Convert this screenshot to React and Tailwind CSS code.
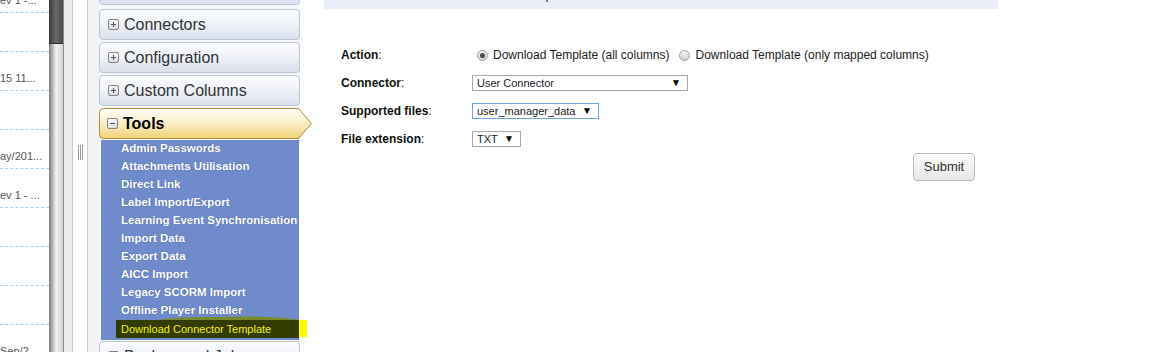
import React from "react";

const leftRows = [
  "ev 1 -...",
  "",
  "15 11...",
  "",
  "ay/201...",
  "ev 1 - ...",
  "",
  "",
  "",
  "Sep/2",
];

const tools = [
  "Admin Passwords",
  "Attachments Utilisation",
  "Direct Link",
  "Label Import/Export",
  "Learning Event Synchronisation",
  "Import Data",
  "Export Data",
  "AICC Import",
  "Legacy SCORM Import",
  "Offline Player Installer",
];

function ToggleBox({ open }) {
  return (
    <span className="flex h-[11px] w-[11px] items-center justify-center rounded-[2px] border border-[#858585] bg-gradient-to-b from-[#fafafa] to-[#dcdcdc]">
      <span className="relative block h-[5px] w-[5px]">
        <span className="absolute left-0 top-[2px] h-[1px] w-[5px] bg-[#555]" />
        {!open && <span className="absolute left-[2px] top-0 h-[5px] w-[1px] bg-[#555]" />}
      </span>
    </span>
  );
}

function AccordionItem({ label, className = "" }) {
  return (
    <div
      className={
        "flex h-[31px] items-center gap-[5px] rounded-[4px] border border-[#bcc5d6] bg-gradient-to-b from-[#fbfcfe] via-[#eef1f7] to-[#d9e0ec] pl-[8px] text-[16px] text-[#333] " +
        className
      }
    >
      <ToggleBox />
      <span>{label}</span>
    </div>
  );
}

function Radio({ checked }) {
  return (
    <span className="flex h-[11px] w-[11px] items-center justify-center rounded-full border border-[#a0a0a0] bg-gradient-to-b from-[#f4f4f4] to-[#d2d2d2]">
      {checked && <span className="h-[5px] w-[5px] rounded-full bg-[#4a4a4a]" />}
    </span>
  );
}

function FakeSelect({ value, width, focused }) {
  return (
    <div
      className={
        "flex h-[16px] items-center justify-between border bg-white pl-[4px] pr-[6px] text-[11px] leading-none text-[#222] " +
        width +
        (focused ? " border-[#6f9fe6]" : " border-[#a9a9a9]")
      }
    >
      <span>{value}</span>
      <span className="text-[10px] text-black">▼</span>
    </div>
  );
}

function Label({ text }) {
  return (
    <div className="w-[131px] text-[12px] text-[#111]">
      <span className="font-bold">{text}</span>:
    </div>
  );
}

export default function App() {
  return (
    <div className="flex h-[352px] w-[1158px] overflow-hidden bg-white font-['Liberation_Sans',Arial,sans-serif]">
      {/* list column */}
      <div className="w-[49px] shrink-0 overflow-hidden">
        <div className="-mt-[26px]">
          {leftRows.map((t, i) => (
            <div
              key={i}
              className="flex h-[39px] items-end whitespace-nowrap border-b border-dashed border-[#a9d0ea] pb-[5px] text-[11px] leading-[14px] text-[#555]"
            >
              {t}
            </div>
          ))}
        </div>
      </div>

      {/* scrollbar */}
      <div className="flex w-[14px] shrink-0 flex-col bg-gradient-to-r from-[#7d7d7d] via-[#f2f2f2] to-[#d4d4d4]">
        <div className="h-[44px] border-b border-[#2e2e2e] bg-gradient-to-r from-[#3a3a3a] via-[#6a6a6a] to-[#4a4a4a]" />
      </div>

      {/* splitter */}
      <div className="flex w-[36px] shrink-0">
        <div className="w-[10px] border-l border-r border-l-[#8a8a8a] border-r-[#c8c8c8] bg-[#ececec]" />
        <div className="flex w-[15px] justify-center border-r border-[#cdcdcd] bg-white pt-[145px]">
          <div className="flex h-[15px] gap-[1px]">
            <span className="w-[1px] bg-[#9a9a9a]" />
            <span className="w-[1px] bg-[#9a9a9a]" />
            <span className="w-[1px] bg-[#9a9a9a]" />
          </div>
        </div>
        <div className="flex-1 bg-[#f1f3f7]" />
      </div>

      {/* sidebar */}
      <div className="relative w-[201px] shrink-0 bg-[#f4f6fa]">
        <AccordionItem label="Reports" className="-mt-[26px] mb-[4px]" />
        <div className="flex flex-col gap-[2px]">
          <AccordionItem label="Connectors" />
          <AccordionItem label="Configuration" />
          <AccordionItem label="Custom Columns" />
          <div className="relative h-[31px]">
            <svg className="absolute left-0 top-0 overflow-visible" width="214" height="31">
              <defs>
                <linearGradient id="tg" x1="0" y1="0" x2="0" y2="1">
                  <stop offset="0" stopColor="#fffef9" />
                  <stop offset="0.45" stopColor="#fcf1cd" />
                  <stop offset="1" stopColor="#f1d175" />
                </linearGradient>
              </defs>
              <path
                d="M4.5 0.5 H199.5 L212.5 15.5 L199.5 30.5 H4.5 Q0.5 30.5 0.5 26.5 V4.5 Q0.5 0.5 4.5 0.5 Z"
                fill="url(#tg)"
                stroke="#a6902f"
              />
            </svg>
            <div className="relative flex h-full items-center gap-[5px] pl-[8px] text-[16px] font-bold text-black">
              <ToggleBox open />
              <span>Tools</span>
            </div>
          </div>
        </div>
        <div className="relative ml-[2px] mt-[1px] w-[198px] bg-[#6f8bcb] pb-[2px]">
          {tools.map((t) => (
            <div
              key={t}
              className="flex h-[18px] items-center whitespace-nowrap pl-[20px] text-[11.5px] font-bold text-white [text-shadow:0_0_1px_rgba(40,50,90,0.6)]"
            >
              {t}
            </div>
          ))}
          <svg className="absolute left-[36px] top-[173px]" width="164" height="11">
            <path d="M0 11 Q30 3 80 4 Q130 2 164 7 V11 Z" fill="#7a8a10" opacity="0.85" />
          </svg>
          <div className="relative ml-[15px] flex h-[18px] items-center whitespace-nowrap bg-[#323c00] pl-[5px] text-[11px] text-[#f0f000]">
            Download Connector Template
            <span className="absolute -right-[8px] top-0 h-[17px] w-[8px] bg-[#ffff00]" />
          </div>
        </div>
        <AccordionItem label="Background Jobs" className="mt-[1px]" />
      </div>

      {/* main */}
      <div className="flex-1 pl-[24px]">
        <div className="h-[9px] w-[674px] overflow-hidden bg-[#e9eef8]">
          <div className="-mt-[13px] pl-[40px] text-[13px] leading-[16px] text-[#333]">
            Use this tool to download a template for the selected connector.
          </div>
        </div>
        <div className="mt-[32px] pl-[17px]">
          <div className="flex h-[28px] items-center">
            <Label text="Action" />
            <div className="flex items-center text-[12px] text-[#222]">
              <span className="ml-[5px]"><Radio checked /></span>
              <span className="ml-[5px]">Download Template (all columns)</span>
              <span className="ml-[9px]"><Radio /></span>
              <span className="ml-[6px]">Download Template (only mapped columns)</span>
            </div>
          </div>
          <div className="flex h-[28px] items-center">
            <Label text="Connector" />
            <FakeSelect value="User Connector" width="w-[216px]" />
          </div>
          <div className="flex h-[28px] items-center">
            <Label text="Supported files" />
            <FakeSelect value="user_manager_data" width="w-[127px]" focused />
          </div>
          <div className="flex h-[28px] items-center">
            <Label text="File extension" />
            <FakeSelect value="TXT" width="w-[49px]" />
          </div>
        </div>
        <div className="flex w-[651px] justify-end">
          <button className="h-[28px] w-[62px] rounded-[4px] border border-[#b9b9b9] bg-gradient-to-b from-[#fdfdfd] to-[#e6e6e6] text-[13px] text-[#333]">
            Submit
          </button>
        </div>
      </div>
    </div>
  );
}
